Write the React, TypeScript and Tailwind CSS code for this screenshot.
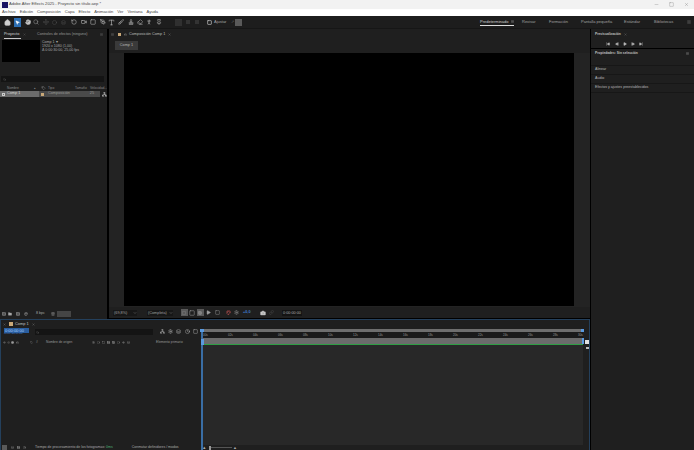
import React from "react";
import { Home, Hand, Search, RotateCcw, Camera, Square, PenTool, Type, Brush, Stamp, Eraser, Pin, Play, SkipBack, SkipForward, StepBack, StepForward, ChevronDown, Folder, Film, Trash2, Palette, Settings, Menu, Minus, X, Network, Layers, Clock, Eye, Volume2, Lock, Circle, Grid3x3, Maximize, MousePointer2, Move, Video, PersonStanding, Tag, Link } from "lucide-react";

const menus = ["Archivo", "Edición", "Composición", "Capa", "Efecto", "Animación", "Ver", "Ventana", "Ayuda"];
const ticks = ["00s", "02s", "04s", "06s", "08s", "10s", "12s", "14s", "16s", "18s", "20s", "22s", "24s", "26s", "28s", "30s"];

function Slot({ w, children }: { w: string; children: React.ReactNode }) {
  return <div className={`${w} shrink-0 flex items-center justify-center`}>{children}</div>;
}

export default function App() {
  return (
    <div className="w-[694px] h-[450px] flex flex-col bg-black overflow-hidden font-['Liberation_Sans',sans-serif] text-[#b0b0b0] text-[4px]">
      <div className="h-[9px] shrink-0 bg-[#f2f2f2] flex items-center pl-[2px] text-[#444]">
        <div className="w-[6px] h-[6px] bg-[#1b1464] mr-[1px]" />
        <span className="text-[4.1px]">Adobe After Effects 2025 - Proyecto sin título.aep *</span>
        <div className="ml-auto flex items-center gap-[10px] pr-[5px]">
          <Minus size={5} strokeWidth={1} />
          <Square size={5} strokeWidth={1} />
          <X size={5} strokeWidth={1} />
        </div>
      </div>
      <div className="h-[7px] shrink-0 bg-white flex items-center gap-[4px] pl-[2px] text-[#444] text-[4.1px]">
        {menus.map((m) => <span key={m}>{m}</span>)}
      </div>
      <div className="h-[13px] shrink-0 bg-[#1d1d1d] flex items-center pl-[3px] text-[#c4c4c4] border-b border-[#161616]">
        <Slot w="w-[8px]"><Home size={7} fill="#d0d0d0" /></Slot>
        <div className="w-[7px] h-[9px] bg-[#2d6fb3] flex items-center justify-center mx-[3px] shrink-0">
          <MousePointer2 size={5} fill="#fff" color="#fff" />
        </div>
        <Slot w="w-[7px]"><Hand size={6} fill="#c4c4c4" /></Slot>
        <Slot w="w-[10px]"><Search size={6} className="text-[#999]" /></Slot>
        <div className="flex text-[#555] mr-[1px]">
          <Slot w="w-[9px]"><Move size={6} /></Slot>
          <Slot w="w-[9px]"><Circle size={5} /></Slot>
          <Slot w="w-[9px]"><Layers size={5} /></Slot>
        </div>
        <Slot w="w-[10px]"><RotateCcw size={6} /></Slot>
        <Slot w="w-[9px]"><Video size={6} /></Slot>
        <Slot w="w-[10px]"><Square size={6} /></Slot>
        <Slot w="w-[9px]"><PenTool size={6} /></Slot>
        <Slot w="w-[9px]"><Type size={7} /></Slot>
        <Slot w="w-[10px]"><Brush size={6} /></Slot>
        <Slot w="w-[9px]"><Stamp size={6} /></Slot>
        <Slot w="w-[9px]"><Eraser size={6} /></Slot>
        <Slot w="w-[10px]"><PersonStanding size={6} /></Slot>
        <Slot w="w-[9px]"><Pin size={6} /></Slot>
        <div className="flex items-center ml-[11px] text-[#444]">
          <Slot w="w-[9px]"><div className="w-[7px] h-[7px] bg-[#303030]" /></Slot>
          <Slot w="w-[9px]"><div className="w-[4px] h-[4px] bg-[#333]" /></Slot>
          <Slot w="w-[9px]"><div className="w-[4px] h-[4px] bg-[#333]" /></Slot>
        </div>
        <Square size={5} className="ml-[6px] mr-[2px] text-[#d0d0d0]" strokeWidth={3} />
        <span className="text-[#a8a8a8] w-[11px]">Ajustar</span>
        <span className="ml-[6px] mr-[1px] text-[#666]">↗</span>
        <div className="w-[7px] h-[7px] bg-[#5a5a5a]" />
        <div className="ml-auto flex items-center text-[#a0a0a0]">
          <div className="flex items-center mr-[8px] border-b border-[#dcdcdc] text-[#d0d0d0] leading-[7px] w-[34px] shrink-0">
            <span>Predeterminado</span><Menu size={3} className="ml-auto" />
          </div>
          <span className="w-[27px] shrink-0">Revisar</span>
          <span className="w-[32px] shrink-0">Formación</span>
          <span className="w-[43px] shrink-0">Pantalla pequeña</span>
          <span className="w-[30px] shrink-0">Estándar</span>
          <span className="w-[33px] shrink-0">Bibliotecas</span>
          <Menu size={4} className="mr-[3px]" />
        </div>
      </div>
      <div className="flex-1 flex min-h-0">
        <div className="w-[590px] flex flex-col shrink-0">
          <div className="h-[290px] flex shrink-0">
            <div className="w-[107px] shrink-0 flex flex-col bg-[#1f1f1f]">
              <div className="h-[11px] flex items-center px-[4px] shrink-0">
                <span className="text-[3.9px] leading-[8px] text-[#d8d8d8] border-b border-[#c8c8c8] w-[17px] shrink-0">Proyecto</span>
                <X size={3} className="text-[#777] ml-[2px] mr-[11px] shrink-0" />
                <span className="text-[3.7px] text-[#9a9a9a]">Controles de efectos (ninguno)</span>
                <Menu size={3} className="ml-auto text-[#888]" />
              </div>
              <div className="h-[36px] flex pl-[2px] gap-[2px] shrink-0">
                <div className="w-[38px] h-[22px] bg-black" />
                <div className="text-[3.6px] leading-[4.2px] text-[#a8a8a8]">
                  <div>Comp 1 ▾</div>
                  <div>1920 x 1080 (1,00)</div>
                  <div>Δ 0:00:30:00, 25,00 fps</div>
                </div>
              </div>
              <div className="ml-[1px] mr-[3px] h-[6px] bg-[#141414] flex items-center px-[2px] text-[#777] shrink-0">
                <Search size={3} />
              </div>
              <div className="h-[6px] flex items-center pl-[7px] text-[3.3px] text-[#8a8a8a] mt-[3px] shrink-0">
                <span className="w-[27px] shrink-0">Nombre</span>
                <span className="w-[7px] shrink-0">▴</span>
                <Tag size={4} className="w-[5px] shrink-0 text-[#aaa]" />
                <span className="w-[27px] ml-[2px] shrink-0">Tipo</span>
                <span className="w-[15px] shrink-0">Tamaño</span>
                <span className="shrink-0">Velocidad...</span>
              </div>
              <div className="h-[6px] flex items-center shrink-0 text-[3.8px]">
                <div className="w-[39px] h-full bg-[#6b6b6b] flex items-center pl-[2px] text-[#d4d4d4] shrink-0">
                  <div className="w-[3px] h-[3px] border border-[#ccc] mr-[2px]" />Comp 1
                </div>
                <div className="w-[61px] h-full bg-[#4a4a4a] flex items-center pl-[2px] text-[#9a9a9a] shrink-0">
                  <div className="w-[3px] h-[3px] bg-[#c9a878] mr-[4px]" />Composición
                  <span className="ml-auto mr-[6px]">25</span>
                </div>
                <Network size={5} className="ml-[2px] text-[#d8d8d8] shrink-0" />
              </div>
              <div className="mt-auto h-[9px] flex items-center pl-[1px] text-[#a8a8a8] shrink-0 mb-[1px]">
                <Slot w="w-[5px]"><Film size={4} /></Slot>
                <Slot w="w-[8px]"><Folder size={4} fill="#a8a8a8" /></Slot>
                <Slot w="w-[8px]"><Film size={4} /></Slot>
                <Slot w="w-[8px]"><Palette size={4} /></Slot>
                <span className="px-[1px] ml-[5px] text-[3.6px] w-[11px] text-center shrink-0">8 bpc</span>
                <Trash2 size={4} className="ml-[5px] shrink-0" />
                <div className="w-[14px] h-[6px] bg-[#454545] ml-[2px] shrink-0" />
              </div>
            </div>
            <div className="w-[2px] shrink-0 bg-black" />
            <div className="flex-1 flex flex-col bg-[#232323] min-w-0">
              <div className="h-[11px] flex items-center pl-[2px] bg-[#1f1f1f] text-[#999] shrink-0">
                <Menu size={3} className="shrink-0" />
                <div className="w-[3px] h-[3px] bg-[#c9a878] ml-[4px] shrink-0" />
                <Lock size={3} className="ml-[3px] mr-[2px] shrink-0" />
                <span className="text-[3.8px] text-[#bcbcbc]">Composición Comp 1</span>
                <X size={3} className="ml-[3px] shrink-0" />
              </div>
              <div className="h-[13px] bg-[#1f1f1f] flex shrink-0 pt-[1px] pl-[6px]">
                <div className="w-[23px] h-[9px] bg-[#3a3a3a] text-[#b8b8b8] flex items-center justify-center text-[3.8px]">Comp 1</div>
              </div>
              <div className="flex-1 flex justify-center pr-[1px] min-h-0 bg-[#232323]">
                <div className="w-[450px] h-[253px] bg-black" />
              </div>
              <div className="h-[12px] shrink-0 bg-[#1f1f1f] flex items-center pl-[4px] text-[3.8px] text-[#a0a0a0] border-b border-black">
                <div className="flex w-[24px] shrink-0 bg-[#171717] leading-[6px] justify-between items-center pl-[1px] mr-[10px]">
                  <span>(69,8%)</span><ChevronDown size={4} />
                </div>
                <div className="flex w-[26px] shrink-0 bg-[#171717] leading-[6px] justify-between items-center pl-[1px] mr-[7px]">
                  <span>(Completa)</span><ChevronDown size={4} />
                </div>
                <Slot w="w-[8px]"><div className="w-[7px] h-[7px] bg-[#5a5a5a] flex items-center justify-center"><Maximize size={4} /></div></Slot>
                <Slot w="w-[8px]"><Square size={6} /></Slot>
                <Slot w="w-[8px]"><div className="w-[7px] h-[7px] bg-[#5a5a5a] flex items-center justify-center"><Grid3x3 size={4} /></div></Slot>
                <Slot w="w-[9px]"><Play size={5} fill="#a0a0a0" /></Slot>
                <Slot w="w-[8px]"><Square size={5} /></Slot>
                <div className="w-[3px] shrink-0" />
                <Slot w="w-[8px]"><Palette size={5} className="text-[#c25555]" /></Slot>
                <Slot w="w-[9px]"><Settings size={5} /></Slot>
                <span className="text-[#3f7fd0] w-[9px] ml-[2px] mr-[7px] font-bold shrink-0">+0,0</span>
                <Slot w="w-[8px]"><Camera size={6} fill="#ccc" /></Slot>
                <Slot w="w-[8px]"><Link size={5} className="text-[#555]" /></Slot>
                <span className="bg-[#141414] ml-[7px] text-center leading-[6px] text-[#aaa] w-[20px] shrink-0">0:00:00:00</span>
              </div>
            </div>
          </div>
          <div className="h-[131px] border border-b-0 border-[#24405c] bg-[#1f1f1f] flex flex-col relative shrink-0">
            <div className="h-[8px] flex items-center pl-[2px] text-[#999] shrink-0">
              <X size={3} className="shrink-0" />
              <div className="w-[4px] h-[4px] bg-[#c9a878] ml-[3px] mr-[1px] shrink-0" />
              <span className="text-[#c0c0c0] text-[3.9px] ml-[1px]">Comp 1</span>
              <X size={3} className="ml-[3px] shrink-0" />
            </div>
            <div className="flex-1 flex min-h-0">
              <div className="w-[200px] shrink-0 flex flex-col">
                <div className="h-[11px] flex items-start shrink-0">
                  <div className="w-[25px] ml-[3px] shrink-0">
                    <div className="h-[5px] bg-[#2a5ea0] text-[#a8d0ff] leading-[5px] text-[4px] pl-[1px]">0:00:00:00</div>
                    <div className="h-[2px] text-[2.4px] leading-[2px] text-[#3f7fd0] whitespace-nowrap">00000 (25,00 fps)</div>
                  </div>
                  <div className="w-[118px] h-[6px] bg-[#141414] ml-[6px] flex items-center pl-[1px] text-[#777] mt-[1px] shrink-0">
                    <Search size={3} />
                  </div>
                  <div className="flex items-center ml-[5px] mt-[1px] text-[#b8b8b8] shrink-0">
                    <Slot w="w-[8px]"><Network size={5} /></Slot>
                    <Slot w="w-[8px]"><Settings size={5} /></Slot>
                    <Slot w="w-[9px]"><Layers size={5} /></Slot>
                    <Slot w="w-[8px]"><Clock size={5} /></Slot>
                    <Slot w="w-[8px]"><Square size={5} /></Slot>
                  </div>
                </div>
                <div className="h-[6px] flex items-center pl-[1px] text-[3.3px] text-[#9a9a9a] shrink-0">
                  <Slot w="w-[4px]"><Eye size={3} /></Slot>
                  <Slot w="w-[4px]"><Volume2 size={3} /></Slot>
                  <Slot w="w-[5px]"><Circle size={3} fill="#9a9a9a" /></Slot>
                  <Slot w="w-[5px]"><Lock size={3} /></Slot>
                  <div className="w-[9px] shrink-0" />
                  <Slot w="w-[4px]"><Tag size={3} /></Slot>
                  <span className="ml-[3px] w-[10px] shrink-0">#</span>
                  <span className="w-[45px] shrink-0">Nombre de origen</span>
                  <div className="flex items-center w-[65px] shrink-0 text-[#aaa]">
                    <Slot w="w-[5px]"><Settings size={3} /></Slot>
                    <Slot w="w-[5px]"><Circle size={3} /></Slot>
                    <Slot w="w-[5px]"><Square size={3} /></Slot>
                    <Slot w="w-[5px]"><Film size={3} /></Slot>
                    <Slot w="w-[5px]"><Grid3x3 size={3} /></Slot>
                    <Slot w="w-[5px]"><Circle size={3} /></Slot>
                    <Slot w="w-[5px]"><Eye size={3} /></Slot>
                    <Slot w="w-[5px]"><Layers size={3} /></Slot>
                  </div>
                  <span className="shrink-0">Elemento primario</span>
                </div>
                <div className="flex-1" />
                <div className="h-[5px] flex items-center text-[3.5px] pl-[1px] text-[#aaa] shrink-0">
                  <div className="w-[5px] h-[5px] bg-[#5a5a5a] mr-[2px] shrink-0" />
                  <Slot w="w-[6px]"><Layers size={3} /></Slot>
                  <Slot w="w-[6px]"><Film size={3} /></Slot>
                  <Slot w="w-[6px]"><Clock size={3} /></Slot>
                  <span className="ml-[8px] whitespace-nowrap">Tiempo de procesamiento de los fotogramas:</span>
                  <span className="text-[#4fae7a] ml-[1px]">0ms</span>
                  <span className="ml-[19px] whitespace-nowrap">Conmutar definidores / modos</span>
                </div>
              </div>
              <div className="flex-1 flex flex-col min-w-0 pl-[2px] pr-[6px]">
                <div className="h-[3px] mt-[1px] bg-[#6e6e6e] shrink-0" />
                <div className="h-[6px] flex justify-between text-[3px] text-[#999] leading-[6px] shrink-0 bg-[#1a1a1a]">
                  {ticks.map((t) => <span key={t}>{t}</span>)}
                </div>
                <div className="h-[6px] bg-[#6b6b6b] shrink-0" />
                <div className="h-[1px] bg-[#2f9e44] shrink-0" />
                <div className="flex-1 bg-[#282828]" />
                <div className="h-[5px] flex items-center text-[#aaa] shrink-0">
                  <span className="text-[5px] mr-[3px]">▴</span>
                  <div className="w-[2px] h-[4px] bg-[#999] shrink-0" />
                  <div className="w-[21px] h-[1px] bg-[#555] shrink-0" />
                  <span className="ml-[1px]">▲</span>
                </div>
              </div>
            </div>
            <div className="absolute left-[200px] top-[9px] bottom-0 w-[2px] bg-[#3a6ea5]" />
            <div className="absolute left-[199px] top-[9px] w-[4px] h-[3px] bg-[#5a9ae0]" />
            <div className="absolute left-[200px] top-[19px] w-[3px] h-[6px] bg-[#5a9ae0]" />
            <div className="absolute left-[580px] top-[9px] w-[3px] h-[3px] bg-[#5a9ae0]" />
            <div className="absolute left-[581px] top-[18px] w-[2px] h-[6px] bg-[#5a9ae0]" />
            <div className="absolute left-[584px] top-[20px] w-[4px] h-[4px] bg-[#e0e0e0]" />
            <div className="absolute left-[585px] top-[27px] w-[3px] h-[2px] bg-[#bbb]" />
          </div>
        </div>
        <div className="w-[1px] bg-black shrink-0" />
        <div className="w-[103px] shrink-0 flex flex-col bg-[#1f1f1f]">
          <div className="h-[11px] flex items-center pl-[4px] text-[#c0c0c0] shrink-0">
            <span className="font-bold text-[3.3px]">Previsualización</span>
            <X size={3} className="ml-[3px] text-[#888]" />
          </div>
          <div className="h-[9px] flex items-center pl-[13px] text-[#bbb] border-b border-black shrink-0">
            <Slot w="w-[8px]"><SkipBack size={4} fill="#bbb" /></Slot>
            <Slot w="w-[9px]"><StepBack size={4} fill="#bbb" /></Slot>
            <Slot w="w-[8px]"><Play size={4} fill="#bbb" /></Slot>
            <Slot w="w-[8px]"><StepForward size={4} fill="#bbb" /></Slot>
            <Slot w="w-[8px]"><SkipForward size={4} fill="#bbb" /></Slot>
          </div>
          <div className="h-[9px] flex items-center pl-[4px] text-[#c0c0c0] shrink-0">
            <span className="font-bold text-[3.3px]">Propiedades: Sin selección</span>
            <Menu size={3} className="ml-auto mr-[5px]" />
          </div>
          <div className="h-[8px] shrink-0 border-b border-[#171717]" />
          <div className="h-[9px] flex items-center pl-[4px] text-[#b8b8b8] text-[3.6px] border-b border-[#171717] shrink-0">Alinear</div>
          <div className="h-[9px] flex items-center pl-[4px] text-[#b8b8b8] text-[3.6px] border-b border-[#171717] shrink-0">Audio</div>
          <div className="h-[9px] flex items-center pl-[4px] text-[#b8b8b8] text-[3.6px] border-b border-[#171717] shrink-0">Efectos y ajustes preestablecidos</div>
        </div>
      </div>
    </div>
  );
}
